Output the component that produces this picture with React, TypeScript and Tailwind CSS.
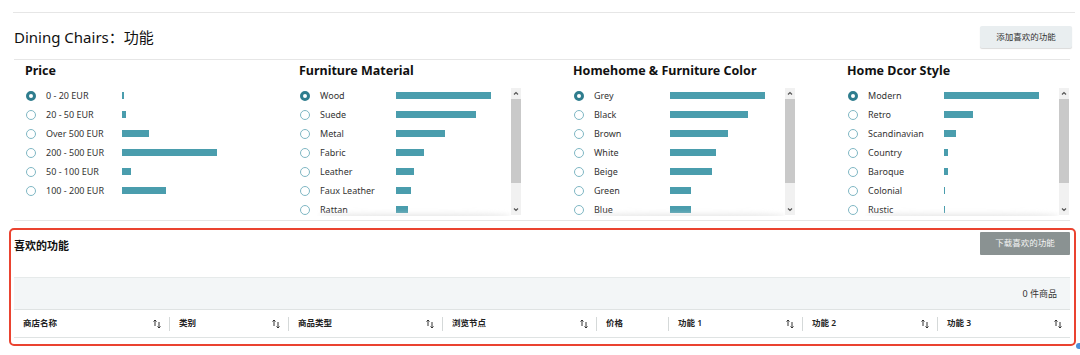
import React from "react";

type FilterItem = { label: string; value: number };
type FilterGroup = { title: string; items: FilterItem[]; scroll: boolean };

const groups: FilterGroup[] = [
  {
    title: "Price",
    scroll: false,
    items: [
      { label: "0 - 20 EUR", value: 2 },
      { label: "20 - 50 EUR", value: 4 },
      { label: "Over 500 EUR", value: 27 },
      { label: "200 - 500 EUR", value: 95 },
      { label: "50 - 100 EUR", value: 9 },
      { label: "100 - 200 EUR", value: 44 },
    ],
  },
  {
    title: "Furniture Material",
    scroll: true,
    items: [
      { label: "Wood", value: 95 },
      { label: "Suede", value: 80 },
      { label: "Metal", value: 49 },
      { label: "Fabric", value: 28 },
      { label: "Leather", value: 18 },
      { label: "Faux Leather", value: 15 },
      { label: "Rattan", value: 12 },
    ],
  },
  {
    title: "Homehome & Furniture Color",
    scroll: true,
    items: [
      { label: "Grey", value: 95 },
      { label: "Black", value: 78 },
      { label: "Brown", value: 58 },
      { label: "White", value: 46 },
      { label: "Beige", value: 42 },
      { label: "Green", value: 21 },
      { label: "Blue", value: 21 },
    ],
  },
  {
    title: "Home Dcor Style",
    scroll: true,
    items: [
      { label: "Modern", value: 95 },
      { label: "Retro", value: 29 },
      { label: "Scandinavian", value: 12 },
      { label: "Country", value: 4 },
      { label: "Baroque", value: 4 },
      { label: "Colonial", value: 1 },
      { label: "Rustic", value: 1 },
    ],
  },
];

const columns = [
  { label: "商店名称", width: 155, sort: true },
  { label: "类别", width: 119, sort: true },
  { label: "商品类型", width: 154, sort: true },
  { label: "浏览节点", width: 154, sort: true },
  { label: "价格", width: 72, sort: false },
  { label: "功能 1", width: 134, sort: true },
  { label: "功能 2", width: 135, sort: true },
  { label: "功能 3", width: 133, sort: true },
];

function Radio({ checked }: { checked: boolean }) {
  return checked ? (
    <span className="block w-[10px] h-[10px] rounded-full border-[3px] border-[#2f7d8e] bg-white" />
  ) : (
    <span className="block w-[10px] h-[10px] rounded-full border border-[#7fb7c4] bg-white" />
  );
}

function SortIcon() {
  return (
    <svg width="8" height="10" viewBox="0 0 8 10" className="text-[#333]">
      <path d="M2 7V1M0.5 2.5L2 1l1.5 1.5" stroke="currentColor" strokeWidth="1" fill="none" />
      <path d="M6 3v6M4.5 7.5L6 9l1.5-1.5" stroke="currentColor" strokeWidth="1" fill="none" />
    </svg>
  );
}

function Scrollbar() {
  return (
    <div className="w-[10px] h-[127px] mt-[2px] bg-[#f1f1f1] flex flex-col items-center">
      <svg width="10" height="11" viewBox="0 0 10 11" className="text-[#555]">
        <path d="M3 6.5L5 4.5l2 2" stroke="currentColor" strokeWidth="1.2" fill="none" />
      </svg>
      <div className="w-[10px] h-[84px] bg-[#c9c9c9]" />
      <div className="flex-1" />
      <svg width="10" height="11" viewBox="0 0 10 11" className="text-[#555]">
        <path d="M3 4.5L5 6.5l2-2" stroke="currentColor" strokeWidth="1.2" fill="none" />
      </svg>
    </div>
  );
}

function FilterColumn({ group }: { group: FilterGroup }) {
  return (
    <div className="w-[274px] shrink-0">
      <h3 className="text-[12.5px] font-bold text-[#111] leading-[18px] h-[18px] mt-[2px]">{group.title}</h3>
      <div className="flex mt-[6px]">
        <div className="relative w-[212px] h-[130px] overflow-hidden">
          {group.items.map((item, i) => (
            <div key={item.label} className="flex items-center h-[19px]">
              <div className="w-[21px] pl-[1px]">
                <Radio checked={i === 0} />
              </div>
              <span className="w-[76px] text-[9px] text-[#333]">{item.label}</span>
              <span className="h-[7px] bg-[#4a9dad]" style={{ width: item.value }} />
            </div>
          ))}
          {group.scroll && (
            <div className="absolute left-[20px] right-0 bottom-[-4px] h-[9px] bg-gradient-to-b from-transparent to-[#dcdcdc] rounded-[50%] blur-[2px]" />
          )}
        </div>
        {group.scroll && <Scrollbar />}
      </div>
    </div>
  );
}

export default function App() {
  return (
    <div
      className="relative w-[1080px] h-[355px] bg-white overflow-hidden text-[#111]"
      style={{ fontFamily: '"Noto Sans", "Noto Sans CJK SC", sans-serif' }}
    >
      <div className="h-[12px]" />
      <div className="ml-[13px] w-[1062px] border-t border-[#e6e6e6]" />

      <div className="ml-[14px] w-[1058px] h-[46px] flex items-center justify-between">
        <h1 className="text-[15px] text-[#111] pt-[3px]">Dining Chairs：功能</h1>
        <button className="w-[92px] h-[22px] mt-[2px] bg-[#e9eef0] rounded-[2px] shadow-[0_1px_1px_rgba(0,0,0,0.15)] text-[8.5px] text-[#333]">
          添加喜欢的功能
        </button>
      </div>
      <div className="ml-[14px] w-[1056px] border-t border-[#e6e6e6]" />

      <div className="ml-[25px] flex h-[160px]">
        {groups.map((g) => (
          <FilterColumn key={g.title} group={g} />
        ))}
      </div>
      <div className="ml-[14px] w-[1056px] border-t border-[#e6e6e6]" />

      <div className="ml-[9px] mt-[7px] w-[1067px] h-[118px] border-[2.5px] border-[#ea4330] rounded-[5px] pl-[3px] pr-[4px]">
        <div className="flex items-start justify-between h-[47px] pt-[2px]">
          <h2 className="text-[11px] font-bold text-[#111] mt-[6px]">喜欢的功能</h2>
          <button className="w-[90px] h-[23px] bg-[#8a9292] text-[8.5px] text-[#f4f4f4] rounded-[1px]">
            下载喜欢的功能
          </button>
        </div>
        <div className="h-[32px] bg-[#f3f6f7] border-t border-[#e6eaea] flex items-center justify-end pr-[13px]">
          <span className="text-[9px] text-[#333]">0 件商品</span>
        </div>
        <div className="h-[29px] flex items-center border-t border-b border-[#dfe3e3]">
          {columns.map((c, i) => (
            <div key={c.label} className="flex items-center h-full" style={{ width: c.width }}>
              {i > 0 && <span className="w-px h-[14px] bg-[#d5d9d9]" />}
              <span className="flex-1 pl-[9px] text-[8.5px] font-semibold text-[#222]">{c.label}</span>
              {c.sort && (
                <span className="mr-[8px]">
                  <SortIcon />
                </span>
              )}
            </div>
          ))}
        </div>
      </div>
      <span className="absolute left-[1076px] top-[343px] w-[6px] h-[6px] rounded-full bg-[#4a90d9]" />
    </div>
  );
}
